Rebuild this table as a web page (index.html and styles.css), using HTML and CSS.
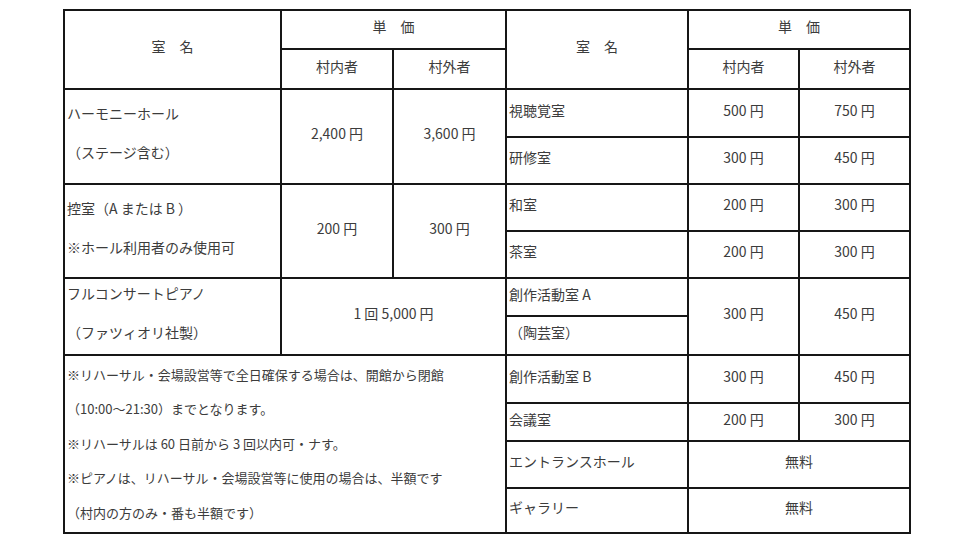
FILE: index.html
```html
<!DOCTYPE html>
<html lang="ja">
<head>
<meta charset="utf-8">
<link rel="stylesheet" href="styles.css">
</head>
<body>
<div class="sheet">
  <div class="c rs2">室　名</div>
  <div class="c cs2">単　価</div>
  <div class="c rs2">室　名</div>
  <div class="c cs2">単　価</div>
  <div class="c">村内者</div>
  <div class="c">村外者</div>
  <div class="c">村内者</div>
  <div class="c">村外者</div>

  <div class="n rs2 two">ハーモニーホール<br>（ステージ含む）</div>
  <div class="c rs2">2,400 円</div>
  <div class="c rs2">3,600 円</div>
  <div class="n">視聴覚室</div>
  <div class="c">500 円</div>
  <div class="c">750 円</div>
  <div class="n">研修室</div>
  <div class="c">300 円</div>
  <div class="c">450 円</div>

  <div class="n rs2 two">控室（A または B ）<br>※ホール利用者のみ使用可</div>
  <div class="c rs2">200 円</div>
  <div class="c rs2">300 円</div>
  <div class="n">和室</div>
  <div class="c">200 円</div>
  <div class="c">300 円</div>
  <div class="n">茶室</div>
  <div class="c">200 円</div>
  <div class="c">300 円</div>

  <div class="n rs2 two">フルコンサートピアノ<br>（ファツィオリ社製）</div>
  <div class="c rs2 cs2">1 回 5,000 円</div>
  <div class="n">創作活動室 A</div>
  <div class="c rs2">300 円</div>
  <div class="c rs2">450 円</div>
  <div class="n">（陶芸室）</div>

  <div class="n notes">※リハーサル・会場設営等で全日確保する場合は、開館から閉館<br>（10:00～21:30）までとなります。<br>※リハーサルは 60 日前から 3 回以内可・ナす。<br>※ピアノは、リハーサル・会場設営等に使用の場合は、半額です<br>（村内の方のみ・番も半額です）</div>
  <div class="n">創作活動室 B</div>
  <div class="c">300 円</div>
  <div class="c">450 円</div>
  <div class="n">会議室</div>
  <div class="c">200 円</div>
  <div class="c">300 円</div>
  <div class="n">エントランスホール</div>
  <div class="c cs2">無料</div>
  <div class="n">ギャラリー</div>
  <div class="c cs2">無料</div>
</div>
</body>
</html>
```

FILE: styles.css
```css
html, body {
  margin: 0;
  padding: 0;
  background: #ffffff;
}

body {
  font-family: "Noto Sans CJK JP", "Noto Sans", sans-serif;
  color: #3c3c3c;
}

.sheet {
  margin: 9px 0 0 63px;
  width: 848px;
  box-sizing: border-box;
  display: grid;
  grid-template-columns: 215px 110px 111px 180px 109px 109px;
  grid-template-rows: 37px 38px 46px 45px 45px 45px 36px 37px 46px 36px 45px 43px;
  gap: 2px;
  padding: 2px;
  background: #161616;
}

.c, .n {
  background: #ffffff;
  display: flex;
  align-items: center;
  font-size: 14px;
  line-height: 20px;
  padding-bottom: 7px;
  box-sizing: border-box;
  white-space: nowrap;
}

.c {
  justify-content: center;
  text-align: center;
}

.n {
  justify-content: flex-start;
  padding-left: 2px;
}

.two {
  line-height: 39px;
}

.rs2 {
  grid-row: span 2;
}

.cs2 {
  grid-column: span 2;
}

.notes {
  grid-column: span 3;
  grid-row: span 4;
  font-size: 13px;
  line-height: 34.5px;
  padding-bottom: 0;
}
```
